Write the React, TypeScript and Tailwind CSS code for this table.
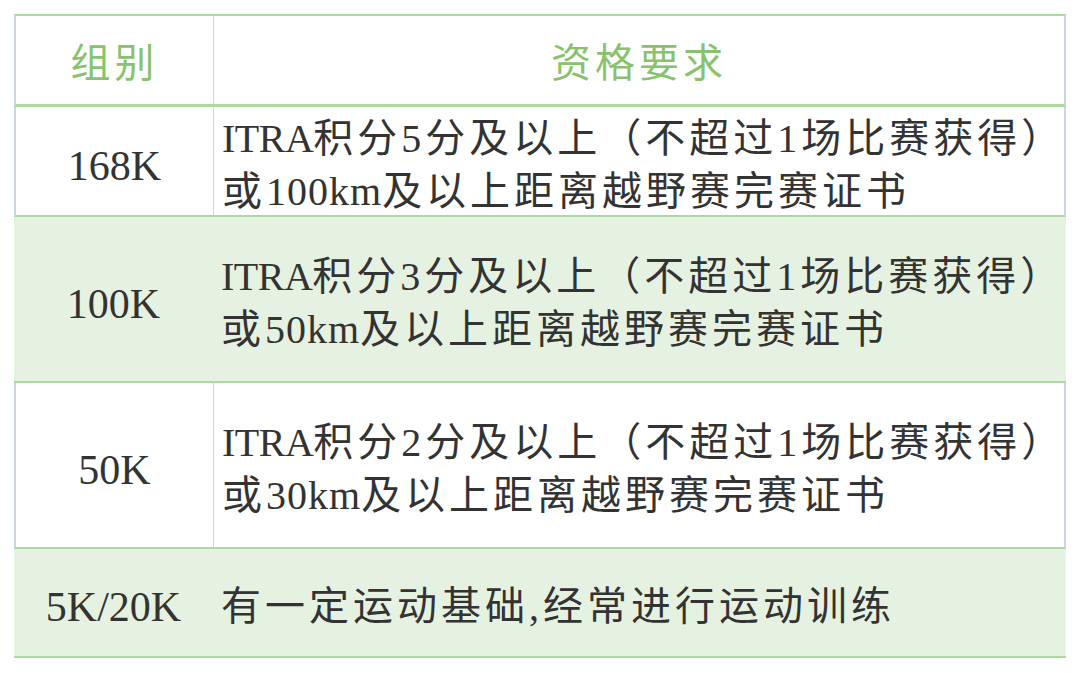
import React from "react";

const font = { fontFamily: '"Liberation Serif", "Noto Sans CJK SC", serif' };

function Row({
  green,
  left,
  right,
  h,
}: {
  green?: boolean;
  left: React.ReactNode;
  right: React.ReactNode;
  h: string;
}) {
  return (
    <div
      className={
        green
          ? `flex ${h} bg-[#e6f2e1] border-b-2 border-[#acd8a2]`
          : `flex ${h} bg-white border-b-2 border-[#acd8a2] border-l-2 border-l-[#cdd4e6] border-r-2 border-r-[#cdd4e6]`
      }
    >
      <div
        className={
          green
            ? "w-[199px] shrink-0 flex items-center justify-center pt-[10px]"
            : "w-[198px] shrink-0 flex items-center justify-center border-r border-r-[#cdd4e6] pt-[10px]"
        }
      >
        {left}
      </div>
      <div className="flex-1 flex items-center pl-[8px] pt-[8px]">{right}</div>
    </div>
  );
}

export default function App() {
  const txt = "text-[40px] tracking-[4px] text-[#333333] whitespace-nowrap";
  const lt = "text-[42px] tracking-normal text-[#333333] whitespace-nowrap";
  return (
    <div className="w-[1080px] h-[673px] bg-white pt-[14px] pl-[14px]" style={font}>
      <div className="w-[1052px] flex flex-col">
        <div className="flex h-[93px] border-t-2 border-t-[#acd8a2] border-b-[3px] border-b-[#acd8a2] border-l-2 border-l-[#cdd4e6] border-r-2 border-r-[#cdd4e6]">
          <div className="w-[198px] shrink-0 flex items-center justify-center border-r border-r-[#cdd4e6] pt-[8px]">
            <span className="text-[40px] tracking-[4px] text-[#88c26d]">组别</span>
          </div>
          <div className="flex-1 flex items-center justify-center pt-[8px]">
            <span className="text-[40px] tracking-[4px] text-[#88c26d]">资格要求</span>
          </div>
        </div>
        <Row
          h="h-[110px]"
          left={<span className={lt}>168K</span>}
          right={
            <div className={txt + " leading-[53px]"}>
              <span className="tracking-[-0.5px]">ITRA</span>积分5分及以上（不超过1场比赛获得）
              <br />
              或<span className="tracking-[1px]">100km</span>及以上距离越野赛完赛证书
            </div>
          }
        />
        <Row
          green
          h="h-[166px]"
          left={<span className={lt}>100K</span>}
          right={
            <div className={txt + " leading-[53px]"}>
              <span className="tracking-[-0.5px]">ITRA</span>积分3分及以上（不超过1场比赛获得）
              <br />
              或<span className="tracking-[1px]">50km</span>及以上距离越野赛完赛证书
            </div>
          }
        />
        <Row
          h="h-[166px]"
          left={<span className={lt}>50K</span>}
          right={
            <div className={txt + " leading-[53px]"}>
              <span className="tracking-[-0.5px]">ITRA</span>积分2分及以上（不超过1场比赛获得）
              <br />
              或<span className="tracking-[1px]">30km</span>及以上距离越野赛完赛证书
            </div>
          }
        />
        <Row
          green
          h="h-[109px]"
          left={<span className={lt}>5K/20K</span>}
          right={<div className={txt}>有一定运动基础,经常进行运动训练</div>}
        />
      </div>
    </div>
  );
}
